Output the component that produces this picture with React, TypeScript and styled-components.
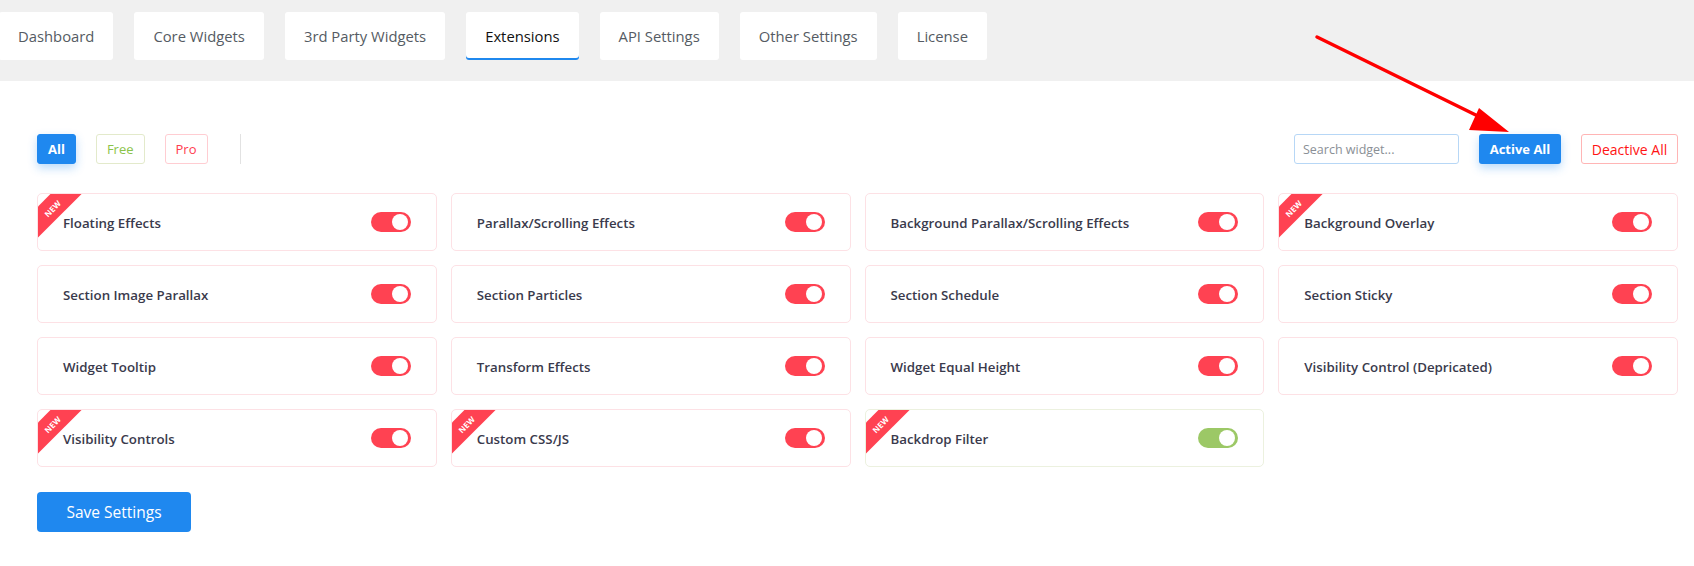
import React, {useState} from "react";
import styled, {createGlobalStyle} from "styled-components";

type Extension = {
    id: string;
    label: string;
    isNew?: boolean;
    enabled: boolean;
}

const initialExtensions: Extension[] = [
    {id: 'floating', label: 'Floating Effects', isNew: true, enabled: true},
    {id: 'parallax', label: 'Parallax/Scrolling Effects', enabled: true},
    {id: 'bg-parallax', label: 'Background Parallax/Scrolling Effects', enabled: true},
    {id: 'bg-overlay', label: 'Background Overlay', isNew: true, enabled: true},
    {id: 'image-parallax', label: 'Section Image Parallax', enabled: true},
    {id: 'particles', label: 'Section Particles', enabled: true},
    {id: 'schedule', label: 'Section Schedule', enabled: true},
    {id: 'sticky', label: 'Section Sticky', enabled: true},
    {id: 'tooltip', label: 'Widget Tooltip', enabled: true},
    {id: 'transform', label: 'Transform Effects', enabled: true},
    {id: 'equal-height', label: 'Widget Equal Height', enabled: true},
    {id: 'visibility-old', label: 'Visibility Control (Depricated)', enabled: true},
    {id: 'visibility', label: 'Visibility Controls', isNew: true, enabled: true},
    {id: 'custom-css', label: 'Custom CSS/JS', isNew: true, enabled: true},
    {id: 'backdrop', label: 'Backdrop Filter', isNew: true, enabled: false},
];

const tabs = ['Dashboard', 'Core Widgets', '3rd Party Widgets', 'Extensions', 'API Settings', 'Other Settings', 'License'];

const GlobalStyle = createGlobalStyle`
    body {
        margin: 0;
        background: #fff;
        font-family: "Open Sans", "Noto Sans", sans-serif;
    }
    * {
        box-sizing: border-box;
    }
`;

const Page = styled.div`
    position: relative;
    width: 100%;
    min-height: 566px;
    overflow: hidden;
`;

const TabBar = styled.nav`
    height: 81px;
    background: #f0f0f0;
    padding-top: 12px;
    display: flex;
    gap: 21px;
    margin-left: -1px;
`;

const Tab = styled.button<{ $active: boolean }>`
    height: 48px;
    padding: 0 19px;
    border: none;
    border-radius: 3px;
    background: #fff;
    font-family: inherit;
    font-size: 14.8px;
    font-weight: 500;
    color: ${({$active}) => $active ? '#111' : '#555b63'};
    box-shadow: ${({$active}) => $active ? 'inset 0 -2px 0 #1f88ee' : 'none'};
    cursor: pointer;
`;

const Content = styled.main`
    padding: 53px 16px 30px 37px;
`;

const Toolbar = styled.div`
    display: flex;
    align-items: center;
    justify-content: space-between;
    height: 30px;
`;

const FilterGroup = styled.div`
    display: flex;
    align-items: center;
    gap: 20px;
`;

const FilterButton = styled.button<{ $variant: 'all' | 'free' | 'pro' }>`
    height: 30px;
    padding: 0 10px;
    border-radius: 3px;
    font-family: inherit;
    font-size: 13px;
    font-weight: ${({$variant}) => $variant === 'all' ? 700 : 500};
    cursor: pointer;
    ${({$variant}) => {
        if ($variant === 'all') return `
            background: #1f88ef;
            border: 1px solid #1f88ef;
            color: #fff;
            box-shadow: 0 4px 10px rgba(31, 136, 239, 0.3);
        `;
        if ($variant === 'free') return `
            background: #fff;
            border: 1px solid #e3eacb;
            color: #8bc34a;
        `;
        return `
            background: #fff;
            border: 1px solid #ffcdd2;
            color: #ff3d4f;
        `;
    }}
`;

const Divider = styled.span`
    width: 1px;
    height: 30px;
    margin-left: 12px;
    background: #e2e2e2;
`;

const ActionGroup = styled.div`
    display: flex;
    align-items: center;
    gap: 20px;
`;

const SearchInput = styled.input`
    width: 165px;
    height: 30px;
    padding: 0 8px;
    border: 1px solid #b7d7f6;
    border-radius: 3px;
    font-family: inherit;
    font-size: 12.5px;
    color: #333;
    outline: none;

    &::placeholder {
        color: #8a8f96;
    }
`;

const ActiveAllButton = styled.button`
    height: 30px;
    width: 82px;
    border: none;
    border-radius: 3px;
    background: #1f88ef;
    color: #fff;
    font-family: inherit;
    font-size: 13px;
    font-weight: 700;
    box-shadow: 0 4px 10px rgba(31, 136, 239, 0.3);
    cursor: pointer;
`;

const DeactiveAllButton = styled.button`
    height: 30px;
    width: 97px;
    border: 1px solid #ffb5b5;
    border-radius: 3px;
    background: #fff;
    color: #ff1414;
    font-family: inherit;
    font-size: 14px;
    font-weight: 500;
    cursor: pointer;
`;

const Grid = styled.section`
    margin-top: 29px;
    display: grid;
    grid-template-columns: repeat(4, 1fr);
    gap: 14px;
`;

const Card = styled.div<{ $enabled: boolean }>`
    position: relative;
    height: 58px;
    padding: 0 25px 0 25px;
    display: flex;
    align-items: center;
    justify-content: space-between;
    border: 1px solid ${({$enabled}) => $enabled ? '#fde1e5' : '#ecf1df'};
    border-radius: 5px;
    background: #fff;
    overflow: hidden;
`;

const Ribbon = styled.span`
    position: absolute;
    left: -26px;
    top: 3px;
    width: 80px;
    height: 22px;
    transform: rotate(-45deg);
    background: #ff4252;
    color: #fff;
    font-size: 8px;
    font-weight: 700;
    display: flex;
    align-items: center;
    justify-content: center;
    letter-spacing: 0.2px;
`;

const CardTitle = styled.span`
    font-size: 13.3px;
    font-weight: 600;
    color: #3a3a4c;
    padding-top: 1px;
`;

const Switch = styled.button<{ $on: boolean }>`
    position: relative;
    width: 40px;
    height: 20px;
    padding: 0;
    border: none;
    border-radius: 10px;
    background: ${({$on}) => $on ? '#ff4252' : '#9cc866'};
    cursor: pointer;

    &::after {
        content: '';
        position: absolute;
        top: 2px;
        right: 3px;
        width: 16px;
        height: 16px;
        border-radius: 50%;
        background: #fff;
    }
`;

const SaveButton = styled.button`
    margin-top: 25px;
    width: 154px;
    height: 40px;
    border: none;
    border-radius: 4px;
    background: #1f88ef;
    color: #fff;
    font-family: inherit;
    font-size: 15.5px;
    cursor: pointer;
`;

const Arrow = styled.svg`
    position: absolute;
    left: 0;
    top: 0;
    pointer-events: none;
`;

function App() {
    const [items, setItems] = useState(initialExtensions);
    const [search, setSearch] = useState('');

    const toggle = (id: string) => {
        setItems((prev) => prev.map((item) => item.id === id ? {...item, enabled: !item.enabled} : item));
    };

    const visible = items.filter((item) => item.label.toLowerCase().includes(search.toLowerCase()));

    return (
        <Page>
            <GlobalStyle/>
            <TabBar>
                {tabs.map((tab) => (
                    <Tab key={tab} type="button" $active={tab === 'Extensions'}>{tab}</Tab>
                ))}
            </TabBar>

            <Content>
                <Toolbar>
                    <FilterGroup>
                        <FilterButton type="button" $variant="all">All</FilterButton>
                        <FilterButton type="button" $variant="free">Free</FilterButton>
                        <FilterButton type="button" $variant="pro">Pro</FilterButton>
                        <Divider/>
                    </FilterGroup>
                    <ActionGroup>
                        <SearchInput
                            placeholder="Search widget..."
                            value={search}
                            onChange={(e) => setSearch(e.target.value)}
                        />
                        <ActiveAllButton type="button">Active All</ActiveAllButton>
                        <DeactiveAllButton type="button">Deactive All</DeactiveAllButton>
                    </ActionGroup>
                </Toolbar>

                <Grid>
                    {visible.map((item) => (
                        <Card key={item.id} $enabled={item.enabled}>
                            {item.isNew && <Ribbon>NEW</Ribbon>}
                            <CardTitle>{item.label}</CardTitle>
                            <Switch
                                type="button"
                                $on={item.enabled}
                                aria-label={item.label}
                                onClick={() => toggle(item.id)}
                            />
                        </Card>
                    ))}
                </Grid>

                <SaveButton type="button">Save Settings</SaveButton>
            </Content>

            <Arrow width="1694" height="566" viewBox="0 0 1694 566">
                <line x1="1317" y1="37" x2="1488" y2="121" stroke="#ff0000" strokeWidth="3.5" strokeLinecap="round"/>
                <polygon points="1509,132 1479,108 1469,130" fill="#ff0000"/>
            </Arrow>
        </Page>
    );
}

export default App;
